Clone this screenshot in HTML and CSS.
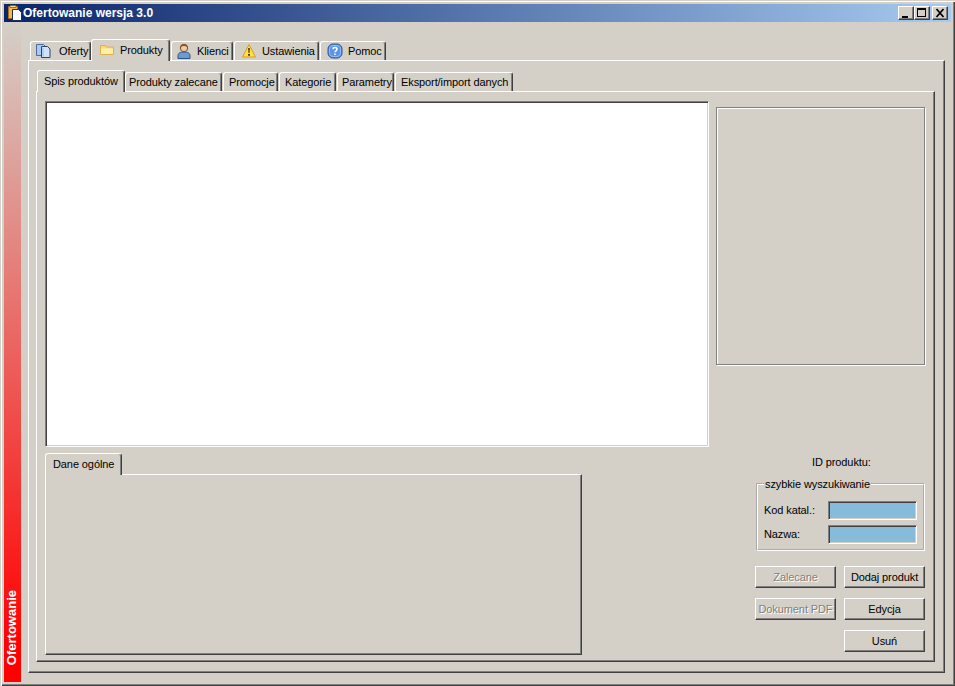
FILE: index.html
```html
<!DOCTYPE html>
<html lang="pl">
<head>
<meta charset="utf-8">
<title>Ofertowanie wersja 3.0</title>
<link rel="stylesheet" href="styles.css">
</head>
<body>
<div class="window">
  <header class="titlebar">
    <svg class="app-icon" width="16" height="16" viewBox="0 0 16 16"><path d="M1.500 1.500h9v12h-9z" fill="#f4b83c" stroke="#a8691a"/><path d="M3 .5h6v2H3z" fill="#fbe08a" stroke="#8a5a18" stroke-width=".8"/><path d="M5.500 4.500h6l3 3v8h-9z" fill="#fff" stroke="#1c2c5c"/></svg>
    <span class="title">Ofertowanie wersja 3.0</span>
    <div class="caption">
      <button class="cap" aria-label="minimalizuj"><svg width="14" height="12" viewBox="0 0 14 12"><path d="M3 9h6v2H3z" fill="#000"/></svg></button>
      <button class="cap" aria-label="maksymalizuj"><svg width="14" height="12" viewBox="0 0 14 12"><path d="M2 1h9v9H2z M3 3v6h7V3z" fill="#000" fill-rule="evenodd"/></svg></button>
      <button class="cap cap-close" aria-label="zamknij"><svg width="14" height="12" viewBox="0 0 14 12"><path d="M3.500 2l7 8M10.500 2l-7 8" stroke="#000" stroke-width="1.800" fill="none"/></svg></button>
    </div>
  </header>
  <div class="body">
    <aside class="sidebar"><span class="sidebar-text">Ofertowanie</span></aside>
    <main class="content">
      <nav class="tabs tabs-main">
        <div class="tab t-oferty">
          <svg width="16" height="16" viewBox="0 0 16 16"><path d="M.5 1.500h7l2 2v9h-9z" fill="#a8caf2" stroke="#4a6c9c"/><path d="M5.500 3.500h6l2.500 2.500v8.500H5.500z" fill="#cfe2f9" stroke="#2c466e"/><path d="M7 5v8.500" stroke="#8fb6ea"/></svg>
          <span>Oferty</span>
        </div>
        <div class="tab tab-active t-produkty">
          <svg width="16" height="16" viewBox="0 0 16 16"><path d="M1.500 12.500v-9h5l1 1.500h7v7.500z" fill="#fcd870" stroke="#e0b050"/><path d="M2 6.500h12v5.500H2z" fill="#fef0a8"/></svg>
          <span>Produkty</span>
        </div>
        <div class="tab t-klienci">
          <svg width="14" height="16" viewBox="0 0 14 16"><path d="M1 15.500v-3c0-2.500 2.500-3.500 6-3.500s6 1 6 3.500v3z" fill="#6a9cd4" stroke="#34527e"/><circle cx="7" cy="5" r="3.700" fill="#f2c8a0" stroke="#7a4c2c"/><path d="M3.500 5c0-3 1.500-4 3.500-4s3.500 1 3.500 4c-1-1.500-2-2-3.500-2s-2.500.5-3.500 2z" fill="#8a5428"/></svg>
          <span>Klienci</span>
        </div>
        <div class="tab t-ustawienia">
          <svg width="16" height="16" viewBox="0 0 16 16"><path d="M8 1.500l6.500 12.500h-13z" fill="#ffe040" stroke="#d89c20" stroke-linejoin="round"/><path d="M7.200 5h1.600l-.3 5h-1z M7.100 11h1.800v1.800H7.100z" fill="#3c3010"/></svg>
          <span>Ustawienia</span>
        </div>
        <div class="tab t-pomoc">
          <svg width="16" height="16" viewBox="0 0 16 16"><rect x="1" y="1" width="14" height="14" rx="5" fill="#5c94e4" stroke="#2c5494"/><rect x="2.500" y="2.500" width="11" height="11" rx="3.500" fill="none" stroke="#94bcf4"/><path d="M6 6.300c0-2.300 4-2.300 4 0 0 1.500-2 1.500-2 3" fill="none" stroke="#fff" stroke-width="1.500"/><path d="M7.200 10.500h1.600v1.600H7.200z" fill="#fff"/></svg>
          <span>Pomoc</span>
        </div>
      </nav>
      <section class="panel panel-outer">
        <nav class="tabs tabs-sub">
          <div class="tab tab-active s-spis">Spis produktów</div>
          <div class="tab s-zalecane">Produkty zalecane</div>
          <div class="tab s-promocje">Promocje</div>
          <div class="tab s-kategorie">Kategorie</div>
          <div class="tab s-parametry">Parametry</div>
          <div class="tab s-eksport">Eksport/import danych</div>
        </nav>
        <div class="panel panel-inner">
          <div class="col-left">
            <div class="list"></div>
            <nav class="tabs tabs-detail">
              <div class="tab tab-active s-dane">Dane ogólne</div>
            </nav>
            <div class="panel panel-detail"></div>
          </div>
          <div class="col-right">
            <div class="preview"></div>
            <div class="id-label">ID produktu:</div>
            <fieldset class="search">
              <legend>szybkie wyszukiwanie</legend>
              <label class="field"><span>Kod katal.:</span><input class="input" type="text"></label>
              <label class="field"><span>Nazwa:</span><input class="input" type="text"></label>
            </fieldset>
            <div class="actions">
              <button class="btn" disabled>Zalecane</button>
              <button class="btn">Dodaj produkt</button>
              <button class="btn" disabled>Dokument PDF</button>
              <button class="btn">Edycja</button>
              <button class="btn btn-last">Usuń</button>
            </div>
          </div>
        </div>
      </section>
    </main>
  </div>
</div>
</body>
</html>
```
FILE: styles.css
```css
* { box-sizing: border-box; }
html, body { margin: 0; padding: 0; background: #d4d0c8; }
body { font: 11px/14px "Liberation Sans", Arial, sans-serif; letter-spacing: -.1px; color: #000; overflow: hidden; }

.window {
  width: 955px; height: 686px; background: #d4d0c8;
  padding: 4px 3px 4px 4px;
  display: flex; flex-direction: column;
  box-shadow: inset 1px 1px 0 #d4d0c8, inset 2px 2px 0 #fff, inset -1px -1px 0 #404040, inset -2px -2px 0 #808080;
}

.titlebar {
  height: 18px; flex: none; display: flex; align-items: center;
  background: linear-gradient(90deg, #0a246a, #a6caf0);
  color: #fff; padding: 0 3px 0 3px; margin-right: 1px;
}
.app-icon { flex: none; }
.title { font-weight: bold; font-size: 12px; letter-spacing: 0; }
.caption { margin-left: auto; display: flex; }
.cap {
  width: 16px; height: 14px; padding: 0; background: #d4d0c8; display: flex; align-items: center; justify-content: center;
  border: 1px solid; border-color: #fff #404040 #404040 #fff;
  box-shadow: inset -1px -1px 0 #808080;
}
.cap svg { display: block; flex: none; }
.cap-close { margin-left: 2px; }

.body { flex: 1; display: flex; min-height: 0; }
.sidebar {
  width: 17px; flex: none; display: flex; justify-content: center; align-items: flex-end; padding: 0 1px 17px 0;
  background: linear-gradient(180deg, #d4d0c8 0%, #ff0000 95%);
}
.sidebar-text {
  writing-mode: vertical-rl; transform: rotate(180deg);
  color: #fff; font-weight: bold; font-size: 13px; line-height: 14px; letter-spacing: 0; white-space: nowrap;
}
.content { flex: 1; padding: 17px 6px 0 7px; min-width: 0; }

.tabs { display: flex; align-items: flex-end; position: relative; z-index: 1; }
.tabs-main { height: 21px; padding-left: 2px; }
.tabs-sub { height: 20px; margin-left: 1px; }
.tabs-detail { height: 20px; margin-top: 7px; }

.tab {
  height: 19px; flex: none; display: flex; align-items: center; white-space: nowrap;
  padding-left: 5px; background: #d4d0c8;
  border-top: 1px solid #fff; border-left: 1px solid #fff; border-right: 1px solid #404040;
  border-top-left-radius: 3px; border-top-right-radius: 3px;
  box-shadow: inset -1px 0 0 #808080;
  margin-right: 1px;
}
.tab svg { flex: none; margin-right: 6px; }
.tab-active { height: 22px; margin-right: 0; margin-bottom: -1px; padding-left: 6px; padding-bottom: 2px; }

.t-oferty { width: 61px; margin-right: 0; }
.t-oferty svg { margin-right: 7px; }
.t-produkty { width: 79px; padding-left: 7px; margin-right: 1px; }
.t-produkty svg { margin-right: 5px; }
.t-klienci { width: 62px; }
.t-ustawienia { width: 85px; padding-left: 6px; }
.t-ustawienia svg { margin-right: 5px; }
.t-pomoc { width: 66px; padding-left: 6px; }
.t-pomoc svg { margin-right: 5px; }
.s-spis { width: 88px; }
.s-zalecane { width: 97px; padding-left: 3px; }
.s-promocje { width: 55px; }
.s-kategorie { width: 57px; }
.s-parametry { width: 57px; padding-left: 4px; }
.s-eksport { width: 118px; }
.s-dane { width: 77px; padding-left: 7px; }

.panel {
  background: #d4d0c8;
  border-top: 1px solid #fff; border-left: 1px solid #fff;
  border-right: 1px solid #404040; border-bottom: 1px solid #404040;
  box-shadow: inset -1px -1px 0 #808080;
}
.panel-outer { width: 917px; height: 613px; padding: 10px 10px 0 7px; }
.panel-inner {
  width: 899px; height: 571px; padding: 9px 9px 0 8px;
  display: grid; grid-template-columns: 671px 209px;
}
.panel-detail { width: 537px; height: 181px; }

.col-left { display: flex; flex-direction: column; }
.list {
  width: 664px; height: 346px; background: #fff;
  border: 1px solid; border-color: #808080 #fff #fff #808080;
  box-shadow: inset 1px 1px 0 #404040, inset -1px -1px 0 #d4d0c8;
}

.col-right { display: flex; flex-direction: column; align-items: flex-end; padding-top: 6px; }
.preview {
  width: 209px; height: 258px;
  border: 1px solid #808080; box-shadow: inset 1px 1px 0 #fff, 1px 1px 0 #fff;
}
.id-label { width: 113px; height: 14px; margin-top: 90px; line-height: 14px; }

.search {
  width: 169px; height: 74px; margin: 8px 0 0; padding: 10px 6px 0 6px; min-width: 0;
  border: 2px groove #fff;
}
.search legend { padding: 0 1px; margin-left: 0; line-height: 14px; white-space: nowrap; }
.field { display: flex; align-items: center; justify-content: space-between; height: 19px; margin-bottom: 5px; }
.field span { position: relative; top: -1px; }
.input {
  width: 89px; height: 19px; padding: 0; background: #86bcd9; outline: none;
  border: 1px solid; border-color: #808080 #fff #fff #808080;
  box-shadow: inset 1px 1px 0 #404040, inset -1px -1px 0 #d4d0c8;
}

.actions {
  width: 170px; margin-top: 15px;
  display: grid; grid-template-columns: 81px 81px; column-gap: 8px; row-gap: 10px;
}
.btn {
  height: 22px; padding: 0; background: #d4d0c8; color: #000;
  font: 11px/14px "Liberation Sans", Arial, sans-serif; letter-spacing: -.1px; white-space: nowrap;
  border: 1px solid; border-color: #fff #404040 #404040 #fff;
  box-shadow: inset -1px -1px 0 #808080;
}
.btn:disabled { color: #808080; text-shadow: 1px 1px 0 #fff; }
.btn-last { grid-column: 2; }
```
